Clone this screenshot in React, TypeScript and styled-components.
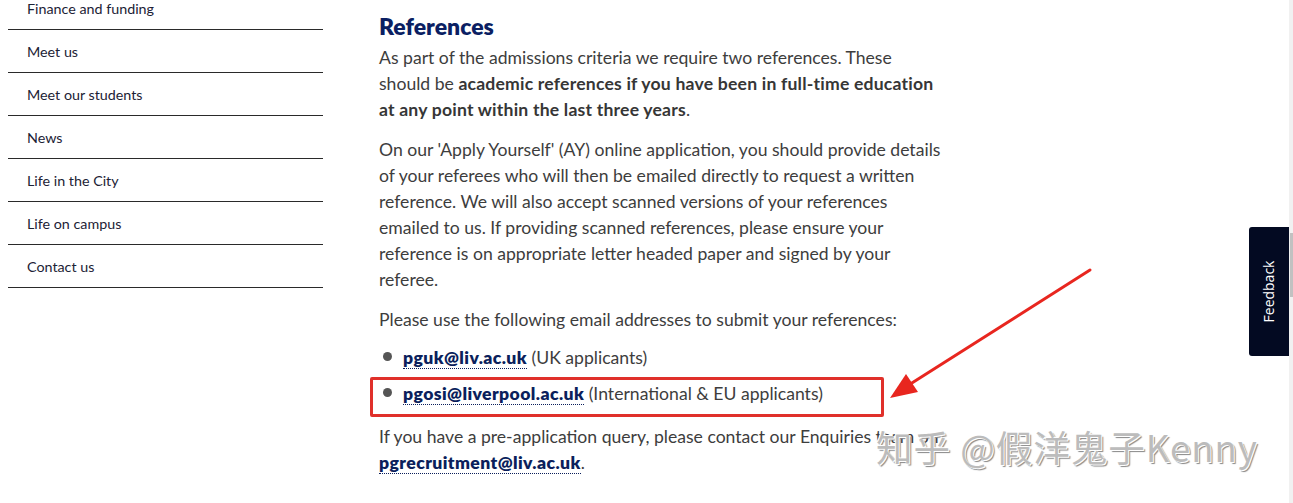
import React from 'react';
import styled, { createGlobalStyle, css } from 'styled-components';

const GlobalStyle = createGlobalStyle`
  html, body {
    margin: 0;
    padding: 0;
    background: #ffffff;
    overflow: hidden;
  }
`;

const font = `'Lato', 'Liberation Sans', sans-serif`;

const Page = styled.div`
  position: relative;
  display: flex;
  width: 1293px;
  height: 503px;
  overflow: hidden;
  font-family: ${font};
`;

const Layout = styled.div`
  flex: 1;
  display: flex;
  padding-left: 8px;
`;

const SideNav = styled.ul`
  width: 315px;
  margin: -13px 0 0;
  padding: 0;
  list-style: none;
  flex-shrink: 0;
`;

const NavItem = styled.li`
  height: 42px;
  border-bottom: 1px solid #2a2a2a;
  display: flex;
  align-items: center;
  padding-left: 19px;
  font-size: 14.3px;
  color: #1c2235;
`;

const Main = styled.main`
  margin-left: 56px;
  width: 562px;
  padding-top: 12px;
  color: #3d3d3d;
`;

const Heading = styled.h2`
  margin: 0 0 5px;
  font-size: 23px;
  line-height: 28px;
  font-weight: 800;
  color: #0b1f63;
`;

const Para = styled.p<{ $gap?: number }>`
  margin: 0 0 ${p => p.$gap ?? 14}px;
  font-size: 17.6px;
  line-height: 26px;
`;

const Strong = styled.strong`
  font-weight: 700;
  letter-spacing: 0.2px;
  color: #363636;
`;

const EmailLink = styled.a`
  color: #0b1f5c;
  font-weight: 800;
  letter-spacing: 0.4px;
  text-decoration: none;
  border-bottom: 1px dotted #0b1f5c;
`;

const Bullets = styled.ul`
  margin: 12px 0 17px;
  padding: 0;
  list-style: none;
  display: flex;
  flex-direction: column;
  gap: 10px;
`;

const Bullet = styled.li<{ $marked?: boolean }>`
  position: relative;
  display: flex;
  align-items: center;
  gap: 11px;
  padding-left: 4px;
  font-size: 17.6px;
  line-height: 26px;

  &::before {
    content: '';
    width: 9px;
    height: 9px;
    border-radius: 50%;
    background: #555555;
    flex-shrink: 0;
    margin-top: -4px;
  }

  ${p =>
    p.$marked &&
    css`
      &::after {
        content: '';
        position: absolute;
        left: -9px;
        top: -4px;
        width: 508px;
        height: 34px;
        border: 3px solid #e0302a;
        border-radius: 2px;
      }
    `}
`;

const Scrollbar = styled.div`
  width: 4px;
  background: #f1f1f1;
  display: flex;
  flex-direction: column;
  padding-top: 233px;
`;

const Thumb = styled.div`
  width: 3px;
  margin-left: 1px;
  height: 64px;
  background: #c1c1c1;
`;

const Feedback = styled.button`
  position: absolute;
  right: 4px;
  top: 227px;
  width: 40px;
  height: 129px;
  border: none;
  border-radius: 3px 0 0 3px;
  background: #030a22;
  color: #ffffff;
  font-family: 'Open Sans', sans-serif;
  font-size: 14px;
  padding: 0;
  display: flex;
  align-items: center;
  justify-content: center;

  span {
    display: block;
    transform: rotate(-90deg);
    white-space: nowrap;
  }
`;

const Arrow = styled.svg`
  position: absolute;
  left: 880px;
  top: 262px;
  pointer-events: none;
`;

const Watermark = styled.div`
  position: absolute;
  left: 876px;
  top: 420px;
  font-family: 'Noto Sans CJK SC', 'Noto Sans', sans-serif;
  font-size: 36.5px;
  letter-spacing: 1px;
  color: #bcbcbc;
  text-shadow: 1px 1px 0 #ffffff, -1px -1px 0 #ffffff, 2px 2px 1px #888888;
  white-space: nowrap;
`;

const navItems = [
  'Finance and funding',
  'Meet us',
  'Meet our students',
  'News',
  'Life in the City',
  'Life on campus',
  'Contact us',
];

export default function App() {
  return (
    <Page>
      <GlobalStyle />
      <Layout>
        <SideNav>
          {navItems.map(item => (
            <NavItem key={item}>{item}</NavItem>
          ))}
        </SideNav>
        <Main>
          <Heading>References</Heading>
          <Para>
            As part of the admissions criteria we require two references. These should be{' '}
            <Strong>academic references if you have been in full-time education at any point within the last three years</Strong>.
          </Para>
          <Para>
            On our 'Apply Yourself' (AY) online application, you should provide details of your referees who will
            then be emailed directly to request a written reference. We will also accept scanned versions of your
            references emailed to us. If providing scanned references, please ensure your reference is on appropriate
            letter headed paper and signed by your referee.
          </Para>
          <Para $gap={0}>Please use the following email addresses to submit your references:</Para>
          <Bullets>
            <Bullet>
              <span>
                <EmailLink href="#">pguk@liv.ac.uk</EmailLink> (UK applicants)
              </span>
            </Bullet>
            <Bullet $marked>
              <span>
                <EmailLink href="#">pgosi@liverpool.ac.uk</EmailLink> (International &amp; EU applicants)
              </span>
            </Bullet>
          </Bullets>
          <Para>
            If you have a pre-application query, please contact our Enquiries team on{' '}
            <EmailLink href="#">pgrecruitment@liv.ac.uk</EmailLink>.
          </Para>
        </Main>
      </Layout>
      <Scrollbar>
        <Thumb />
      </Scrollbar>
      <Feedback>
        <span>Feedback</span>
      </Feedback>
      <Arrow width="220" height="150" viewBox="0 0 220 150">
        <line x1="210" y1="8" x2="24" y2="126" stroke="#e8261f" strokeWidth="3" strokeLinecap="round" />
        <polygon points="10,136 26,112 38,130" fill="#e8261f" />
      </Arrow>
      <Watermark>知乎 @假洋鬼子Kenny</Watermark>
    </Page>
  );
}
